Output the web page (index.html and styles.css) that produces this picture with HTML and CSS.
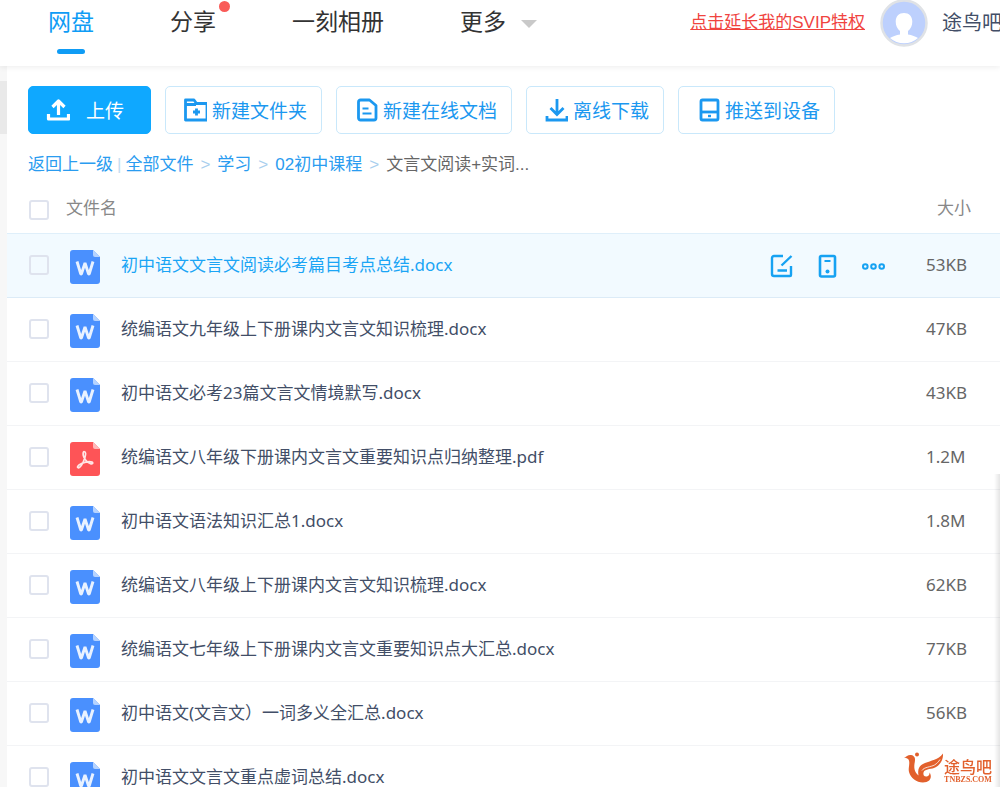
FILE: index.html
```html
<!DOCTYPE html>
<html lang="zh-CN">
<head>
<meta charset="utf-8">
<title>网盘</title>
<link rel="stylesheet" href="styles.css">
</head>
<body>
<svg class="sprite" aria-hidden="true">
  <symbol id="word" viewBox="0 0 30 34">
    <path d="M3 0H23L30 7V31a3 3 0 0 1-3 3H3a3 3 0 0 1-3-3V3a3 3 0 0 1 3-3z" fill="#4a90fe"/>
    <path d="M23 0l7 7h-5a2 2 0 0 1-2-2z" fill="#b5d3ff"/>
    <path d="M7 11.500l3.800 12.500h.6L15 13l3.600 11h.6L23 11.500" fill="none" stroke="#e9f2ff" stroke-width="2.900" stroke-linejoin="bevel"/>
  </symbol>
  <symbol id="pdf" viewBox="0 0 30 34">
    <path d="M3 0H23L30 7V31a3 3 0 0 1-3 3H3a3 3 0 0 1-3-3V3a3 3 0 0 1 3-3z" fill="#fe5457"/>
    <path d="M23 0l7 7h-5a2 2 0 0 1-2-2z" fill="#ffb9ba"/>
    <path d="M14 9.500c2 0 2 3 .8 6.500-1.600 4.500-4.500 9.500-6.300 9.800-1.800.2-1.200-2.600 3-4.300 3.500-1.400 8.500-2.200 10.500-1.400 1.600.8.400 2.200-1.500 1.600-3-.8-6.500-5-7.200-8.200-.4-2 0-4 .7-4z" fill="none" stroke="#ffe6e6" stroke-width="1.700"/>
  </symbol>
</svg>
<div class="app">
  <header class="topbar">
    <nav class="nav">
      <a class="nav-item active" href="#">网盘</a>
      <a class="nav-item has-dot" href="#">分享</a>
      <a class="nav-item" href="#">一刻相册</a>
      <a class="nav-item more" href="#">更多<svg width="16" height="8" viewBox="0 0 16 8"><path d="M0 0h16L8 8z" fill="#c9c9c9"/></svg></a>
    </nav>
    <div class="account">
      <a class="svip" href="#">点击延长我的SVIP特权</a>
      <svg class="avatar" width="48" height="48" viewBox="0 0 48 48" role="img" aria-label="头像">
        <circle cx="24" cy="24" r="22.500" fill="#bdd0fd" stroke="#dfe2e6" stroke-width="2.500"/>
        <path d="M24 14c5 0 8.300 3.400 8.300 8.600 0 4.200-1.600 7.600-4.300 9.400v3.500c3.600.6 8 2 10 3.500a21 21 0 0 1-28 0c2-1.500 6.400-2.900 10-3.500V32c-2.700-1.800-4.300-5.200-4.300-9.400 0-5.200 3.300-8.600 8.300-8.600z" fill="#fff"/>
      </svg>
      <span class="username">途鸟吧</span>
    </div>
  </header>
  <div class="body">
    <div class="rail"><div class="rail-thumb"></div></div>
    <main class="content">
      <div class="toolbar">
        <button class="btn primary" type="button">
          <svg width="24" height="24" viewBox="0 0 24 24" fill="none" stroke="currentColor" stroke-width="3.200"><path d="M12.500 17V4M6.500 9l6-6 6 6M2.500 16v5h20v-5" stroke-linejoin="round"/></svg><span>上传</span></button>
        <button class="btn" type="button">
          <svg width="24" height="24" viewBox="0 0 24 24" fill="none" stroke="currentColor" stroke-width="2.800" stroke-linejoin="round"><path d="M2.500 7V2H11l2.500 3.500H24V22H2.500V6.500H13M13.500 10.500v7M10 14h7"/></svg><span>新建文件夹</span></button>
        <button class="btn" type="button">
          <svg width="24" height="24" viewBox="0 0 24 24" fill="none" stroke="currentColor" stroke-width="2.800" stroke-linejoin="round"><path d="M6.500 2h9L22 7.500V20a2 2 0 0 1-2 2H6.500a2 2 0 0 1-2-2V4a2 2 0 0 1 2-2z"/><path d="M8.500 10.500h6M8.500 15.500h9" stroke-width="2.200"/></svg><span>新建在线文档</span></button>
        <button class="btn" type="button">
          <svg width="24" height="24" viewBox="0 0 24 24" fill="none" stroke="currentColor" stroke-width="2.800"><path d="M13 1v15M6.500 10l6.500 6.500 6.500-6.500M3 18v4h20v-4"/></svg><span>离线下载</span></button>
        <button class="btn" type="button">
          <svg width="24" height="24" viewBox="0 0 24 24" fill="none" stroke="currentColor" stroke-width="2.800"><rect x="5" y="2" width="17" height="20" rx="1.500"/><path d="M5 14h17"/><path d="M12 18h3" stroke-width="2.400"/></svg><span>推送到设备</span></button>
      </div>
      <nav class="crumbs" aria-label="路径">
        <a href="#">返回上一级</a><span class="bar">|</span><a href="#">全部文件</a><span class="sep">&gt;</span><a href="#">学习</a><span class="sep">&gt;</span><a href="#">02初中课程</a><span class="sep">&gt;</span><span>文言文阅读+实词...</span>
      </nav>
      <table class="files">
        <colgroup><col class="w-check"><col class="w-icon"><col><col class="w-actions"><col class="w-size"></colgroup>
        <thead>
          <tr><th class="c-check"><input type="checkbox" aria-label="全选"></th><th colspan="2">文件名</th><th></th><th class="c-size">大小</th></tr>
        </thead>
        <tbody>
          <tr class="selected"><td class="c-check"><input type="checkbox" id="f1"></td><td class="c-icon"><svg width="30" height="34"><use href="#word"/></svg></td><td class="c-name"><label for="f1">初中语文文言文阅读必考篇目考点总结.docx</label></td>
            <td><div class="actions">
              <button type="button" aria-label="编辑"><svg width="24" height="24" viewBox="0 0 24 24" fill="none" stroke="currentColor" stroke-width="2.400"><path d="M13 2H4a2 2 0 0 0-2 2v16a2 2 0 0 0 2 2h16a1 1 0 0 0 1-1v-9M21.500 2L11.500 11.500M7.500 16.500h9.500"/></svg></button>
              <button type="button" aria-label="推送到设备"><svg width="24" height="24" viewBox="0 0 24 24" fill="none" stroke="currentColor" stroke-width="2.600"><rect x="4" y="2" width="15" height="20.500" rx="1.500"/><path d="M8.500 7h6" stroke-width="2"/><circle cx="11.500" cy="17.500" r="2" fill="currentColor" stroke="none"/></svg></button>
              <button type="button" aria-label="更多"><svg width="24" height="24" viewBox="0 0 24 24" fill="none" stroke="currentColor" stroke-width="2"><circle cx="3.300" cy="12.500" r="2.300"/><circle cx="11.500" cy="12.500" r="2.300"/><circle cx="19.700" cy="12.500" r="2.300"/></svg></button>
            </div></td><td class="c-size">53KB</td></tr>
          <tr><td class="c-check"><input type="checkbox" id="f2"></td><td class="c-icon"><svg width="30" height="34"><use href="#word"/></svg></td><td class="c-name"><label for="f2">统编语文九年级上下册课内文言文知识梳理.docx</label></td><td></td><td class="c-size">47KB</td></tr>
          <tr><td class="c-check"><input type="checkbox" id="f3"></td><td class="c-icon"><svg width="30" height="34"><use href="#word"/></svg></td><td class="c-name"><label for="f3">初中语文必考23篇文言文情境默写.docx</label></td><td></td><td class="c-size">43KB</td></tr>
          <tr><td class="c-check"><input type="checkbox" id="f4"></td><td class="c-icon"><svg width="30" height="34"><use href="#pdf"/></svg></td><td class="c-name"><label for="f4">统编语文八年级下册课内文言文重要知识点归纳整理.pdf</label></td><td></td><td class="c-size">1.2M</td></tr>
          <tr><td class="c-check"><input type="checkbox" id="f5"></td><td class="c-icon"><svg width="30" height="34"><use href="#word"/></svg></td><td class="c-name"><label for="f5">初中语文语法知识汇总1.docx</label></td><td></td><td class="c-size">1.8M</td></tr>
          <tr><td class="c-check"><input type="checkbox" id="f6"></td><td class="c-icon"><svg width="30" height="34"><use href="#word"/></svg></td><td class="c-name"><label for="f6">统编语文八年级上下册课内文言文知识梳理.docx</label></td><td></td><td class="c-size">62KB</td></tr>
          <tr><td class="c-check"><input type="checkbox" id="f7"></td><td class="c-icon"><svg width="30" height="34"><use href="#word"/></svg></td><td class="c-name"><label for="f7">统编语文七年级上下册课内文言文重要知识点大汇总.docx</label></td><td></td><td class="c-size">77KB</td></tr>
          <tr><td class="c-check"><input type="checkbox" id="f8"></td><td class="c-icon"><svg width="30" height="34"><use href="#word"/></svg></td><td class="c-name"><label for="f8">初中语文(文言文）一词多义全汇总.docx</label></td><td></td><td class="c-size">56KB</td></tr>
          <tr><td class="c-check"><input type="checkbox" id="f9"></td><td class="c-icon"><svg width="30" height="34"><use href="#word"/></svg></td><td class="c-name"><label for="f9">初中语文文言文重点虚词总结.docx</label></td><td></td><td class="c-size"></td></tr>
        </tbody>
      </table>
    </main>
  </div>
</div>
<div class="edge-shadow"></div>
<div class="watermark">
  <svg width="40" height="32" viewBox="0 0 40 32" fill="#e2602c"><path d="M0 5.500C2.500 5 4 2.500 7 3c4 .6 4.500 4 3.800 7-1 5-.8 10 3.700 13.500C13.500 17 15 13.500 21 11c6-2.500 13-3 18-9.500.5 6-3 12.500-9 14.500-4 1.400-9.500 1-10.500 4.500-.7 2.500 1 4.500 3.300 4 2-.4 3-2 2.700-4 2.500 3.500 1.500 8-3 9.500C15 32 7 27.500 5 20 4 15.500 6.500 11 4.500 7.500 3.500 6 2 6 0 5.500z"/><circle cx="13" cy="2.500" r="2"/><path d="M18 18.500c2-3.500 9-3.500 12.500-5.500 2.400-1.400 4-3.200 5.500-5.500" fill="none" stroke="#fff" stroke-width=".8"/></svg>
  <div class="mark-text"><span class="mark-name">途鸟吧</span><span class="mark-url">TNBZS.COM</span></div>
</div>
</body>
</html>
```
FILE: styles.css
```css
* { box-sizing: border-box; }

body {
  margin: 0;
  background: #fff;
  color: #424e67;
  font-family: "Liberation Sans", "Noto Sans CJK SC", sans-serif;
  font-size: 17px;
  line-height: 24px;
}

a { color: inherit; text-decoration: none; }
button { font: inherit; color: inherit; cursor: pointer; }
svg { display: block; flex: none; }
.sprite { position: absolute; width: 0; height: 0; }

.app {
  display: flex;
  flex-direction: column;
  height: 100vh;
  overflow: hidden;
}

.topbar {
  display: flex;
  justify-content: space-between;
  flex: none;
  height: 66px;
  padding-left: 48px;
  box-shadow: 0 1px 6px rgba(0, 0, 0, .08);
  position: relative;
}

.nav { display: flex; gap: 76px; }
.nav-item {
  position: relative;
  height: 54px;
  font-size: 23px;
  line-height: 44px;
  color: #333;
  white-space: nowrap;
}
.nav-item.active { color: #0f9cf5; }
.nav-item.active::after {
  content: "";
  position: absolute;
  left: 9px;
  right: 9px;
  bottom: 0;
  height: 5px;
  border-radius: 3px;
  background: #0f9cf5;
}
.has-dot::after {
  content: "";
  position: absolute;
  top: 1px;
  right: -14px;
  width: 11px;
  height: 11px;
  border-radius: 50%;
  background: #f95b58;
}
.more { display: flex; gap: 15px; }
.more svg { margin-top: 20px; }

.account { display: flex; align-items: center; height: 46px; }
.svip { color: #f0443f; text-decoration: underline; white-space: nowrap; }
.avatar { margin: 0 14px 0 15px; }
.username {
  width: 58px;
  overflow: hidden;
  font-size: 20px;
  line-height: 30px;
  white-space: nowrap;
}

.body { display: flex; flex: 1; min-height: 0; }
.rail { flex: none; width: 7px; padding-top: 15px; background: #f7f7f7; }
.rail-thumb { height: 53px; background: #e9e9e9; }
.content { flex: 1; min-width: 0; padding-top: 20px; }

.toolbar { display: flex; gap: 14px; padding: 0 21px; }
.btn {
  display: flex;
  align-items: center;
  gap: 5px;
  height: 48px;
  padding: 0 14px 0 17px;
  border: 1px solid #c9e8fb;
  border-radius: 5px;
  background: #fff;
  color: #1b98f0;
  font-size: 19px;
  white-space: nowrap;
}
.btn span { padding-top: 3px; }
.btn.primary {
  gap: 16px;
  padding-right: 26px;
  border-color: #0fa8ff;
  background: #0fa8ff;
  color: #fff;
}

.crumbs {
  display: flex;
  padding: 19px 21px 11px;
  color: #666;
  white-space: nowrap;
}
.crumbs a { color: #2a9cf0; }
.bar { margin: 0 4px; color: #c4dcf0; }
.sep { margin: 0 7px; color: #a9cfee; }

.files {
  width: 100%;
  border-collapse: separate;
  border-spacing: 0;
  table-layout: fixed;
  font-family: "Noto Sans", "Noto Sans CJK SC", sans-serif;
}
.w-check { width: 59px; }
.w-icon { width: 55px; }
.w-actions { width: 160px; }
.w-size { width: 77px; }

.files th {
  height: 46px;
  padding: 0 0 5px;
  border-bottom: 1px solid #dfeffa;
  color: #888;
  font-weight: 400;
  text-align: left;
}
.files td {
  height: 64px;
  padding: 0 0 2px;
  border-bottom: 1px solid #f3f4f6;
}
.selected td { background: #f2faff; border-color: #dcebf7; }
.files .c-check { padding-left: 22px; }
.files th.c-check { padding-bottom: 2px; }
.files .c-icon { padding: 2px 0 0 4px; }
.files td .actions { padding-top: 2px; }
.files .c-size { padding-left: 3px; color: #666; white-space: nowrap; }
.files th.c-size { padding-left: 14px; color: #888; }
.c-name { white-space: nowrap; }
.selected .c-name { color: #1ba5f5; }

input[type="checkbox"] {
  display: block;
  appearance: none;
  width: 20px;
  height: 20px;
  margin: 0;
  border: 2px solid #dfe3ee;
  border-radius: 3px;
  background: #fff;
}
.selected input[type="checkbox"] { background: transparent; }

.actions { display: flex; gap: 22px; padding-left: 7px; }
.actions button {
  padding: 0;
  border: 0;
  background: none;
  color: #16a2f2;
}

.edge-shadow {
  position: fixed;
  right: 0;
  top: 474px;
  bottom: 0;
  width: 6px;
  background: linear-gradient(to right, transparent, rgba(0, 0, 0, .1));
}

.watermark {
  position: fixed;
  right: 8px;
  bottom: 3px;
  display: flex;
  align-items: flex-end;
  color: #e2602c;
}
.mark-text { display: flex; flex-direction: column; align-items: center; }
.mark-name { font-size: 16px; line-height: 16px; font-weight: 500; }
.mark-url {
  font-family: "Liberation Serif", serif;
  font-size: 8px;
  line-height: 8px;
  font-weight: 700;
}
```
